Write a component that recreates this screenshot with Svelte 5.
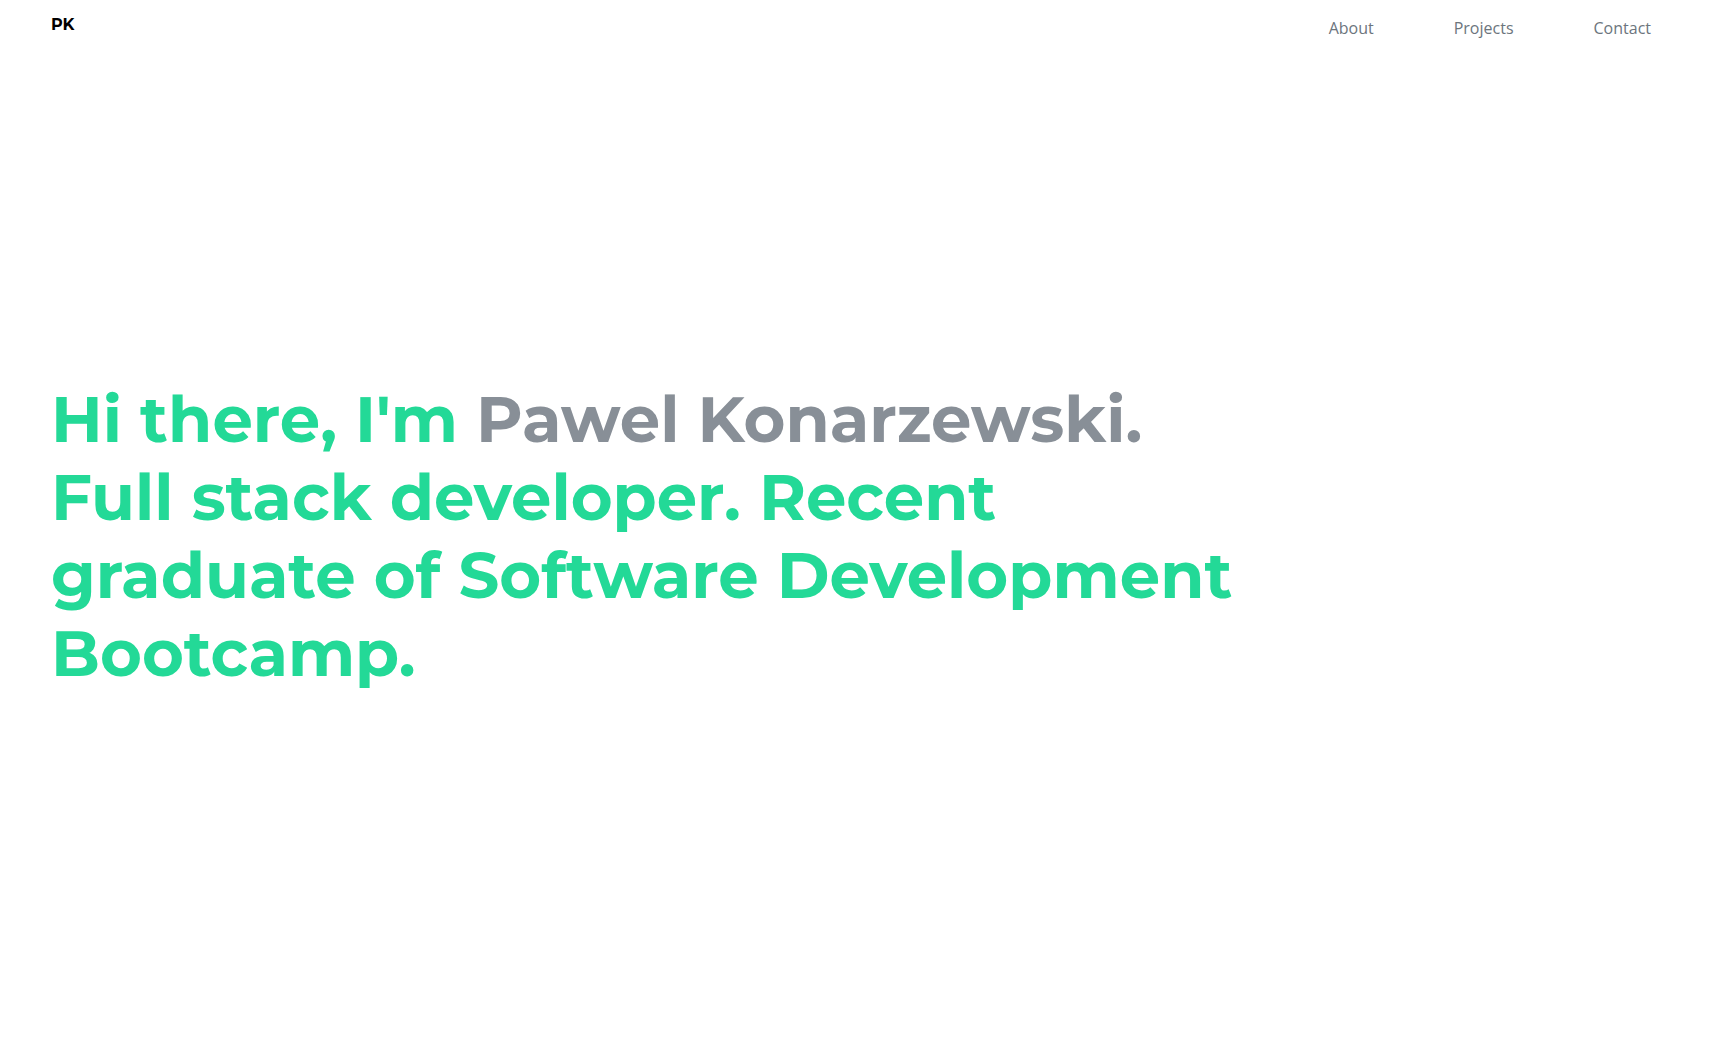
<script>
  const links = ['About', 'Projects', 'Contact'];
</script>

<header>
  <a class="brand" href="#top">PK</a>
  <nav>
    {#each links as link}
      <a href={'#' + link.toLowerCase()}>{link}</a>
    {/each}
  </nav>
</header>
<main>
  <h1>Hi there, I'm <span>Pawel Konarzewski.</span> <br />Full stack developer. Recent graduate of Software Development Bootcamp.</h1>
</main>

<style>
  :global(body) {
    background: #fff;
  }
  :global(#app) {
    display: flex;
    flex-direction: column;
    min-height: 100vh;
  }
  header {
    display: flex;
    justify-content: space-between;
    align-items: flex-start;
    padding: 16px 64px 0 51px;
  }
  a {
    text-decoration: none;
  }
  .brand {
    font: 700 16px/18px Montserrat, Inter, sans-serif;
    color: #000;
  }
  nav {
    display: flex;
    gap: 80px;
  }
  nav a {
    font: 400 16px/24px "Open Sans", sans-serif;
    color: #6c757d;
  }
  main {
    flex: 1;
    display: flex;
    align-items: center;
    padding: 0 51px 30px;
  }
  h1 {
    max-width: 1200px;
    margin: 0;
    font: 700 64px/78px Montserrat, Inter, sans-serif;
    color: #23d997;
  }
  span {
    color: #888f97;
  }
</style>
